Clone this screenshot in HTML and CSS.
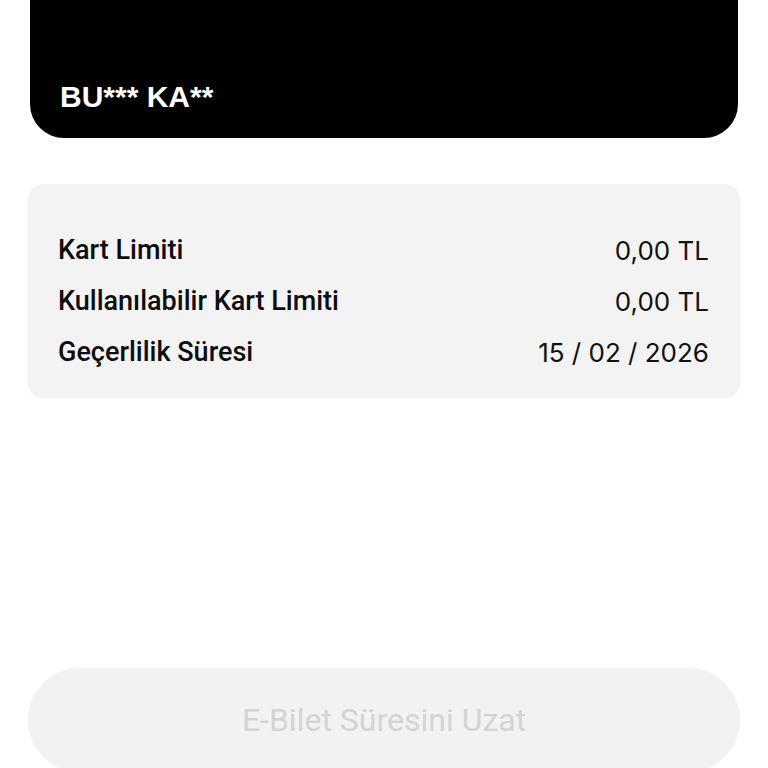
FILE: index.html
```html
<!DOCTYPE html>
<html lang="tr">
<head>
  <meta charset="UTF-8">
  <meta name="viewport" content="width=device-width, initial-scale=1.0">
  <title>E-Bilet</title>
  <link rel="stylesheet" href="styles.css">
</head>
<body>

<div class="card-head">
  <div class="holder">BU*** KA**</div>
</div>

<div class="info-box">
  <div class="info-row">
    <span class="label">Kart Limiti</span>
    <span class="value">0,00 TL</span>
  </div>
  <div class="info-row">
    <span class="label">Kullanılabilir Kart Limiti</span>
    <span class="value">0,00 TL</span>
  </div>
  <div class="info-row">
    <span class="label">Geçerlilik Süresi</span>
    <span class="value">15 / 02 / 2026</span>
  </div>
</div>

<button class="extend-btn" disabled>E-Bilet Süresini Uzat</button>

</body>
</html>
```

FILE: styles.css
```css
html, body {
  height: 768px;
  overflow: hidden;
}
body {
  margin: 0;
  padding: 0 28px;
  background: #fff;
  font-family: Roboto, Arial, sans-serif;
  display: flex;
  flex-direction: column;
}
.card-head {
  flex-shrink: 0;
  margin: 0 2px;
  height: 138px;
  background: #000;
  border-radius: 0 0 34px 34px;
  display: flex;
  align-items: flex-end;
  padding: 0 30px 24px;
  box-sizing: border-box;
}
.holder {
  color: #fff;
  font-family: "Liberation Sans", Arial, sans-serif;
  font-weight: bold;
  font-size: 30px;
}
.info-box {
  flex-shrink: 0;
  margin-top: 46px;
  height: 214px;
  box-sizing: border-box;
  background: #f3f3f3;
  border-radius: 16px;
  box-shadow: 0 1px 3px rgba(0, 0, 0, 0.04);
  padding: 51px 31px 0 30px;
  display: flex;
  flex-direction: column;
  gap: 21px;
}
.info-row {
  display: flex;
  justify-content: space-between;
  align-items: center;
  height: 30px;
}
.label {
  font-weight: 500;
  font-size: 27px;
  color: #0d0d0d;
}
.value {
  font-family: Inter, "Open Sans", sans-serif;
  font-size: 26px;
  color: #111;
}
.extend-btn {
  flex-shrink: 0;
  margin-top: 270px;
  height: 104px;
  border: none;
  border-radius: 52px;
  background: #f2f2f2;
  color: #d4d4d4;
  font-family: Roboto, Arial, sans-serif;
  font-size: 32px;
  padding: 0;
}
```
